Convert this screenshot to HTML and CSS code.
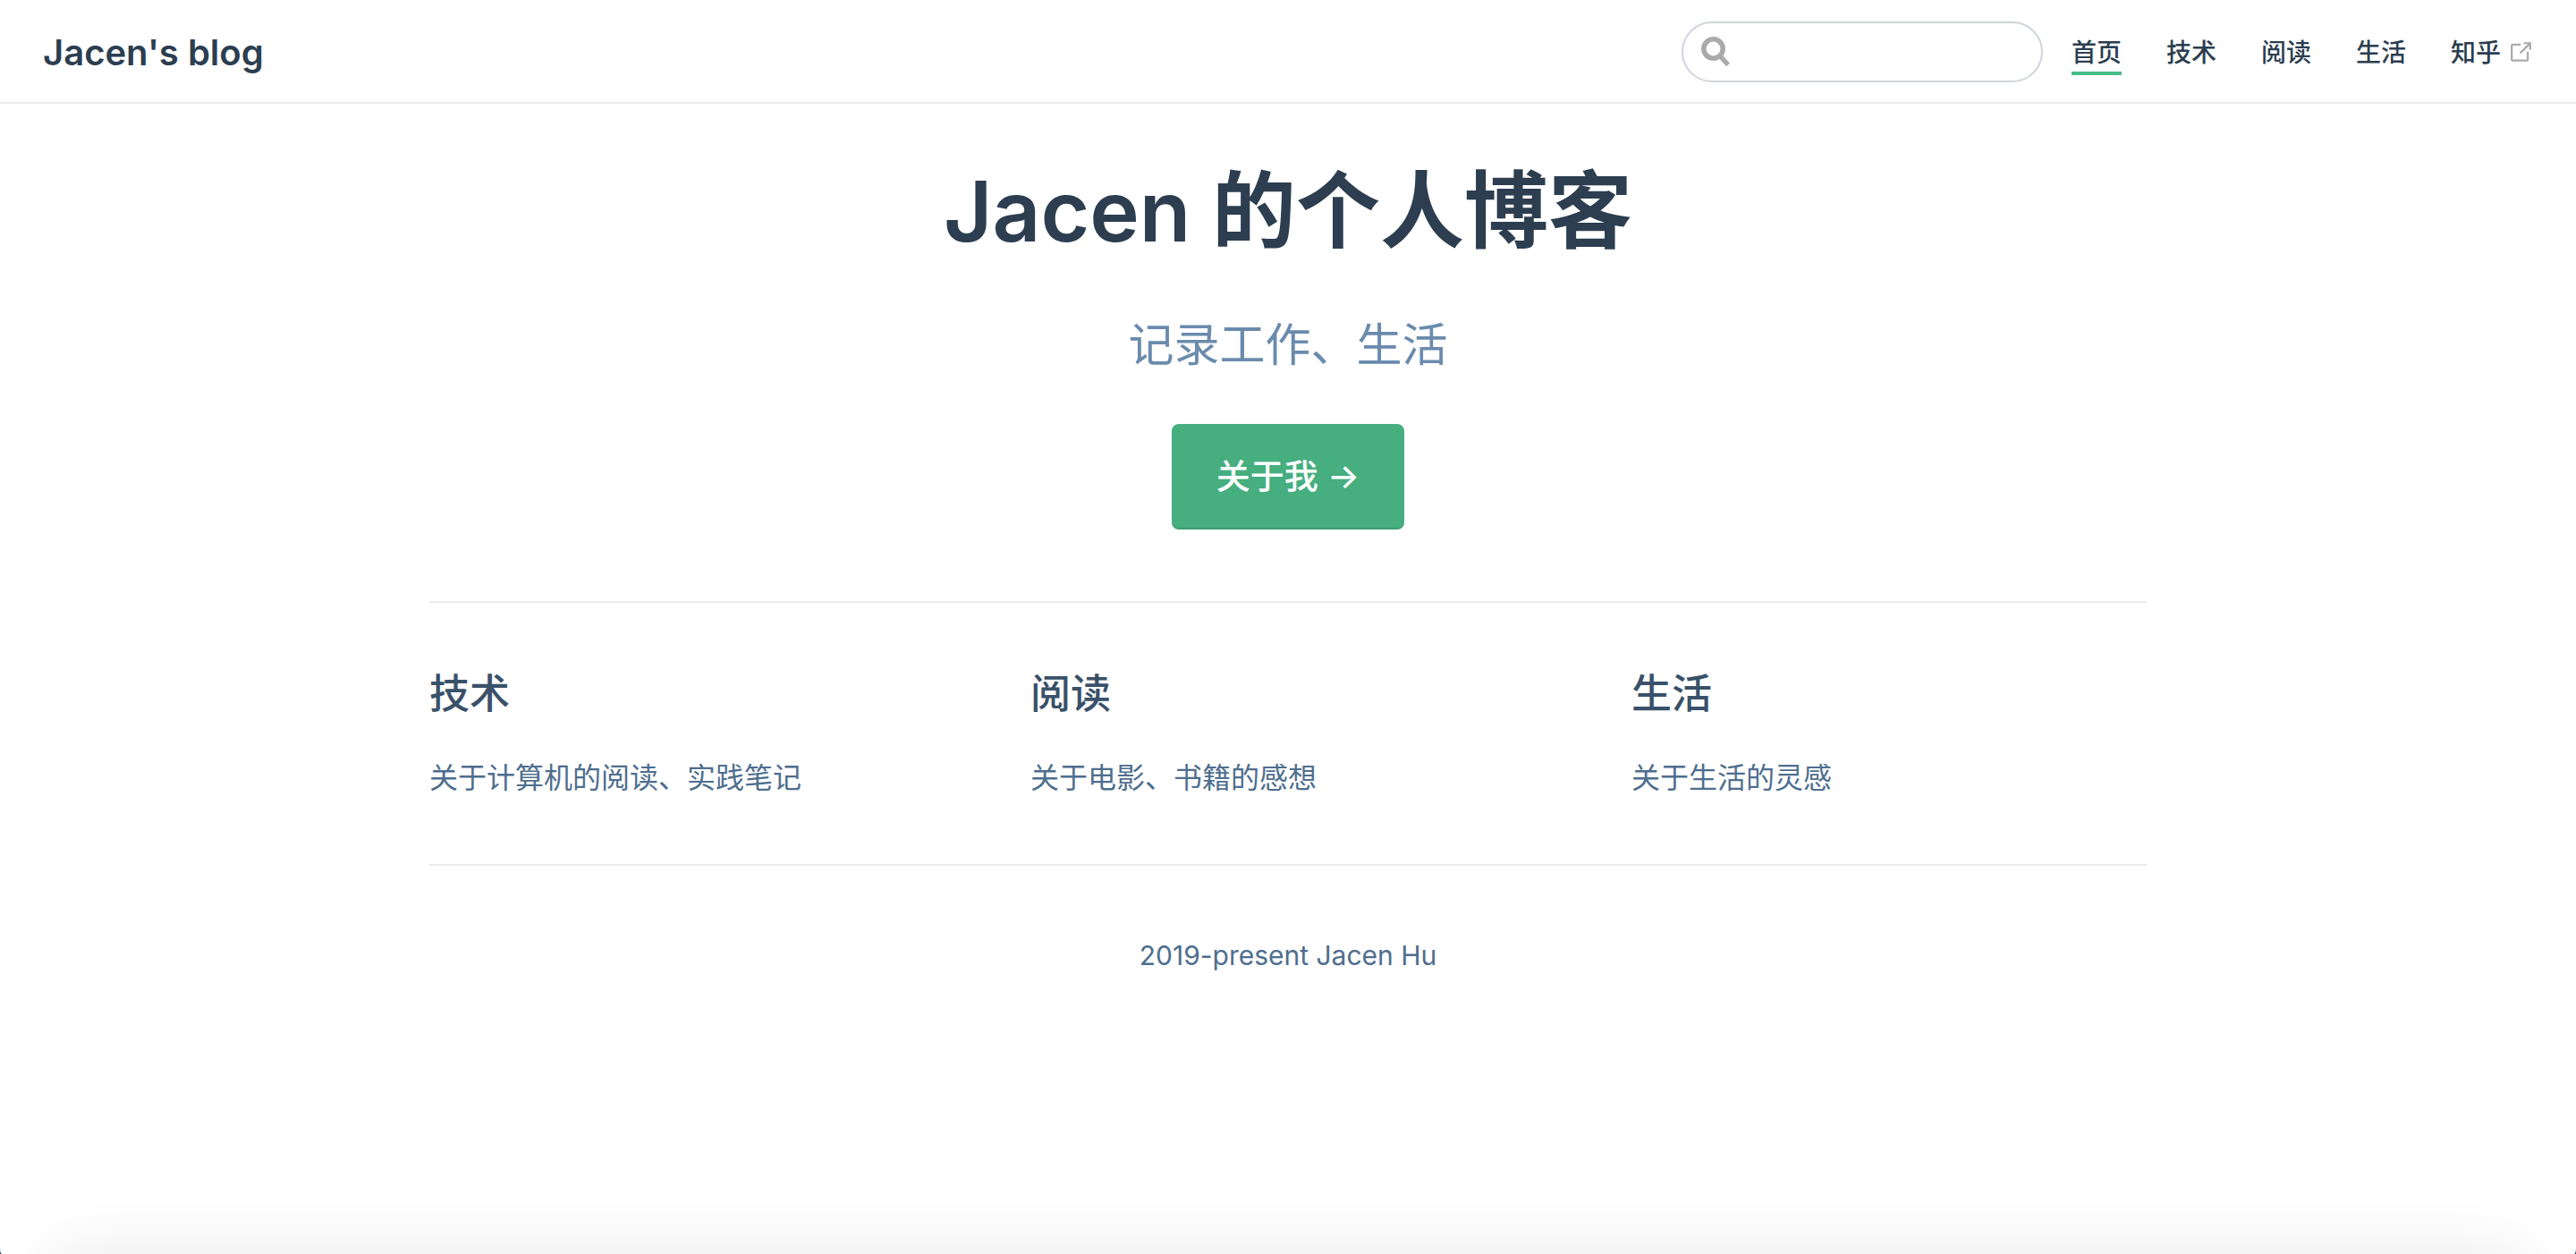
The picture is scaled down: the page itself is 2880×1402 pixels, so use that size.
FILE: index.html
```html
<!DOCTYPE html>
<html lang="zh-CN">
<head>
<meta charset="utf-8">
<meta name="viewport" content="width=device-width, initial-scale=1">
<title>Jacen's blog</title>
<link rel="stylesheet" href="styles.css">
</head>
<body>
<header class="navbar">
  <a class="site-name" href="#">Jacen's blog</a>
  <div class="links">
    <label class="search-box">
      <svg class="search-icon" viewBox="0 0 32 34" aria-hidden="true">
        <circle cx="13.5" cy="13.5" r="10.7" fill="none" stroke="#aaa" stroke-width="5.6"/>
        <path d="M20.500 21L30 31.500" fill="none" stroke="#aaa" stroke-width="5.4"/>
      </svg>
      <input class="search-input" type="search" aria-label="Search" autocomplete="off">
    </label>
    <nav class="nav-links">
      <a class="nav-link active" href="#">首页</a>
      <a class="nav-link" href="#">技术</a>
      <a class="nav-link" href="#">阅读</a>
      <a class="nav-link" href="#">生活</a>
      <a class="nav-link external" href="#">知乎
        <svg class="outbound" viewBox="0 0 100 100" aria-hidden="true">
          <path fill="#aaa" d="M18.800 85.100h56a8 8 0 0 0 8-8v-32h-8v32h-56v-56h32v-8h-32a8 8 0 0 0-8 8v56a8 8 0 0 0 8 8z"/>
          <path fill="#aaa" d="M45.700 48.700l5.700 5.700 33-33.100v16.300h8v-30h-30v8h16.400z"/>
        </svg>
      </a>
    </nav>
  </div>
</header>
<main class="home">
  <section class="hero">
    <h1 class="title">Jacen 的个人博客</h1>
    <p class="description">记录工作、生活</p>
    <a class="action" href="#">关于我 →</a>
  </section>
  <section class="features">
    <article class="feature"><h2>技术</h2><p>关于计算机的阅读、实践笔记</p></article>
    <article class="feature"><h2>阅读</h2><p>关于电影、书籍的感想</p></article>
    <article class="feature"><h2>生活</h2><p>关于生活的灵感</p></article>
  </section>
  <footer class="footer">2019-present Jacen Hu</footer>
</main>
</body>
</html>
```
FILE: styles.css
```css
* { box-sizing: border-box; }

html { background: #1d3a50; }

body {
  position: relative;
  min-height: 100vh;
  margin: 0;
  overflow: hidden;
  border-radius: 0 0 2px 2px / 0 0 6px 6px;
  background: #fff;
  color: #2c3e50;
  font-family: Inter, "Noto Sans CJK SC", sans-serif;
  font-size: 32px;
  -webkit-font-smoothing: antialiased;
}

/* soft shade along the bottom edge of the window */
body::after {
  content: "";
  position: absolute;
  top: 100%;
  left: 60px;
  right: 60px;
  height: 60px;
  box-shadow: 0 0 70px rgba(0, 0, 0, .09);
  pointer-events: none;
}

a { color: inherit; text-decoration: none; }
h1, h2, p { margin: 0; }

.navbar {
  display: flex;
  align-items: center;
  justify-content: space-between;
  height: 116px;
  padding: 2px 48px 0;
  border-bottom: 2px solid #eaecef;
}

.site-name { font-size: 40px; font-weight: 600; }

.links { display: flex; align-items: center; gap: 32px; }

.search-box {
  display: flex;
  align-items: center;
  gap: 12px;
  width: 404px;
  height: 68px;
  padding: 0 20px;
  border: 2px solid #cfd4db;
  border-radius: 34px;
}

.search-icon { flex: none; width: 32px; height: 34px; }

.search-input {
  flex: 1;
  min-width: 0;
  padding: 0;
  border: 0;
  outline: 0;
  background: none;
  color: #4e6e8e;
  font: inherit;
}

.nav-links { display: flex; gap: 50px; }

.nav-link {
  padding-top: 6px;
  border-bottom: 4px solid transparent;
  font-size: 28px;
  font-weight: 500;
  line-height: 42px;
}

.nav-link.active { border-color: #46bd87; }

.external { display: flex; align-items: center; gap: 8px; }

.outbound { width: 28px; height: 28px; }

.home { max-width: 1920px; margin: 0 auto; }

.hero { padding-top: 60px; text-align: center; }

.title { font-size: 94px; font-weight: 600; line-height: 120px; }

.description {
  margin-top: 56px;
  color: #6a8bad;
  font-size: 51px;
  line-height: 68px;
}

.action {
  display: inline-block;
  margin-top: 54px;
  padding: 0 50px;
  border-bottom: 2px solid #3f9d72;
  border-radius: 8px;
  background: #46ae7f;
  color: #fff;
  font-size: 38px;
  font-weight: 500;
  line-height: 116px;
}

.features {
  display: grid;
  grid-template-columns: repeat(3, 1fr);
  gap: 96px;
  margin-top: 80px;
  padding: 74px 0 70px;
  border-top: 2px solid #eaecef;
  border-bottom: 2px solid #eaecef;
}

.feature h2 {
  color: #3a5169;
  font-size: 45px;
  font-weight: 500;
  line-height: 56px;
}

.feature p { margin-top: 40px; color: #4e6e8e; line-height: 52px; }

.footer {
  padding: 74px 0;
  color: #4e6e8e;
  font-size: 30px;
  text-align: center;
  line-height: 52px;
}
```
